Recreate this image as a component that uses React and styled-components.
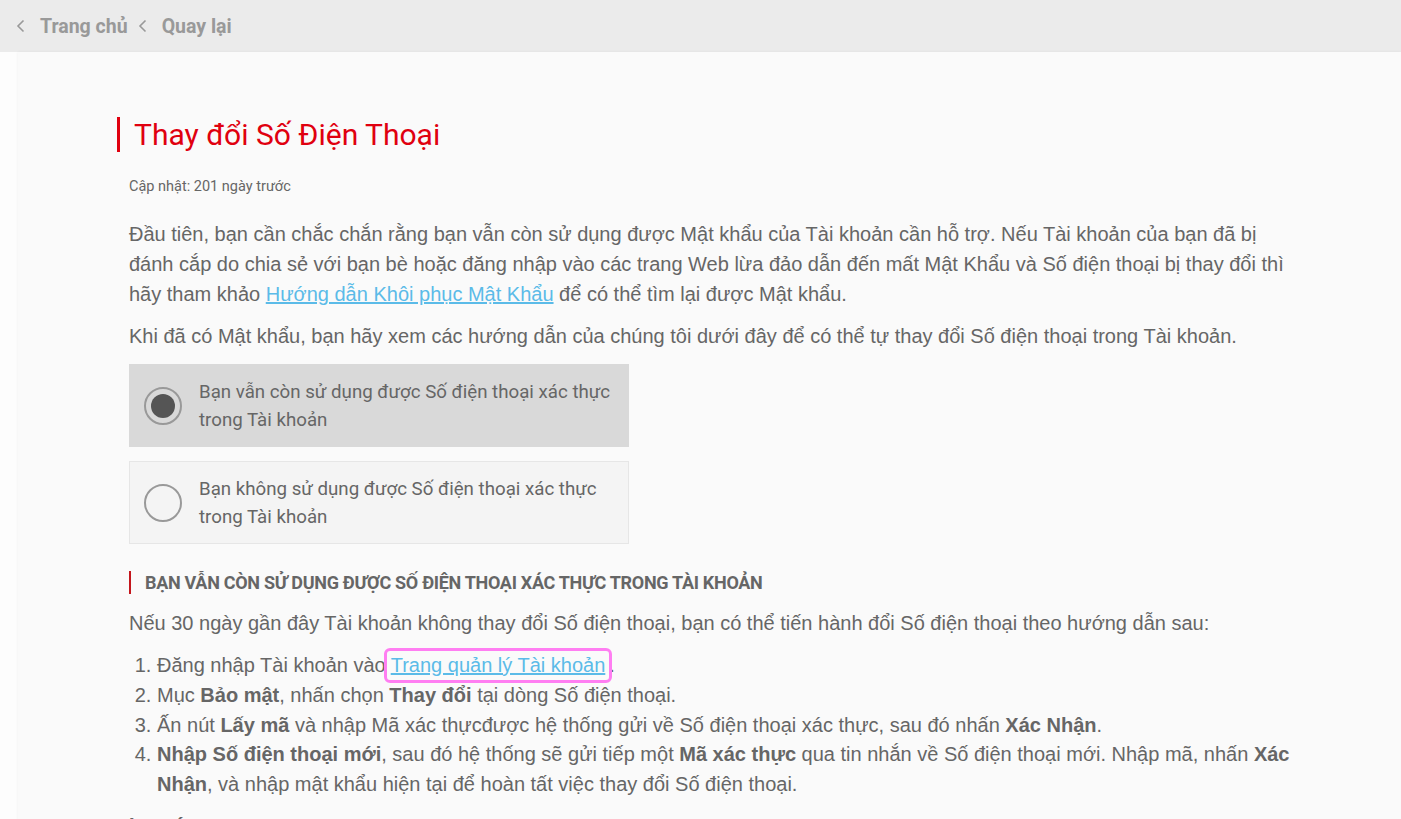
import React, { useState } from 'react'
import styled, { createGlobalStyle } from 'styled-components';

const Global = createGlobalStyle`
  body{
    margin:0;
    background:#fdfdfd;
    font-family:Roboto, "Liberation Sans", Arial, sans-serif;
    overflow:hidden;
  }
`

const TopBar = styled.nav`
  height:52px;
  background:#ebebeb;
  display:flex;
  align-items:center;
  padding-left:16px;
  a{
    display:flex;
    align-items:center;
    gap:14px;
    color:#999;
    font-weight:700;
    font-size:19.5px;
    text-decoration:none;
    margin-right:10px;
  }
`

const Panel = styled.main`
  margin-left:18px;
  background:#fafafa;
  box-shadow:0 0 3px rgba(0,0,0,0.06);
  min-height:767px;
`

const Article = styled.article`
  width:1185px;
  margin:0 auto;
  padding-top:65px;
`

const Title = styled.h1`
  margin:0;
  border-left:3px solid #e0000f;
  padding-left:14px;
  font-size:30px;
  font-weight:400;
  line-height:35px;
  color:#e0000f;
`

const Updated = styled.p`
  margin:26px 0 0 12px;
  font-size:14.5px;
  color:#666;
`

const Body = styled.div`
  padding-left:12px;
  font-family:"Liberation Sans", Arial, sans-serif;
  font-size:20px;
  color:#666;
  p{
    margin:0;
    line-height:30px;
  }
  a{
    color:#5bbbe8;
    text-decoration:underline;
  }
`

const Intro = styled.p`
  &&{ margin-top:24px; }
`

const Next = styled.p`
  &&{ margin-top:12px; }
`

const Choices = styled.div`
  margin-top:13px;
  width:500px;
  display:flex;
  flex-direction:column;
  gap:14px;
`

const Choice = styled.div`
  display:flex;
  align-items:center;
  height:83px;
  box-sizing:border-box;
  padding:0 6px 0 14px;
  gap:17px;
  background:${p => p.$active ? '#d9d9d9' : '#f4f4f4'};
  border:1px solid ${p => p.$active ? '#d9d9d9' : '#e6e6e6'};
  cursor:pointer;
  span{
    font-family:Roboto, sans-serif;
    font-size:18.7px;
    line-height:28px;
    color:#666;
  }
`

const Radio = styled.div`
  flex:none;
  width:34px;
  height:34px;
  border-radius:50%;
  border:2px solid #999;
  display:flex;
  align-items:center;
  justify-content:center;
  &::after{
    content:'';
    width:24px;
    height:24px;
    border-radius:50%;
    background:${p => p.$on ? '#555' : 'transparent'};
  }
`

const Heading = styled.h2`
  margin:27px 0 0;
  border-left:2px solid #c4161c;
  padding-left:14px;
  font-family:Roboto, sans-serif;
  font-size:18px;
  font-weight:700;
  line-height:23px;
  color:#666;
  letter-spacing:-0.3px;
`

const Lead = styled.p`
  &&{ margin-top:14px; }
`

const Steps = styled.ol`
  margin:13px 0 0;
  padding-left:28px;
  line-height:29.8px;
  li b{ color:#666; }
`

const Marked = styled.a`
  outline:3px solid #ff7ef2;
  border-radius:3px;
  padding:3px 4px 4px;
  margin-left:1px;
`

const Cut = styled.p`
  &&{ margin-top:10px; font-weight:700; }
`

const Chevron = () => (
  <svg width="10" height="14" viewBox="0 0 10 14" fill="none" stroke="#999" strokeWidth="1.6">
    <path d="M7.5 1.5 2 7l5.5 5.5" />
  </svg>
)

const choices = [
  'Bạn vẫn còn sử dụng được Số điện thoại xác thực trong Tài khoản',
  'Bạn không sử dụng được Số điện thoại xác thực trong Tài khoản',
]

export default function App() {
  const [picked, setPicked] = useState(0)
  return (
    <>
      <Global />
      <TopBar>
        <a href="#"><Chevron />Trang chủ</a>
        <a href="#"><Chevron />Quay lại</a>
      </TopBar>
      <Panel>
        <Article>
          <Title>Thay đổi Số Điện Thoại</Title>
          <Updated>Cập nhật: 201 ngày trước</Updated>
          <Body>
            <Intro>
              Đầu tiên, bạn cần chắc chắn rằng bạn vẫn còn sử dụng được Mật khẩu của Tài khoản cần hỗ trợ. Nếu Tài khoản của bạn đã bị đánh cắp do chia sẻ với bạn bè hoặc đăng nhập vào các trang Web lừa đảo dẫn đến mất Mật Khẩu và Số điện thoại bị thay đổi thì hãy tham khảo <a href="#">Hướng dẫn Khôi phục Mật Khẩu</a> để có thể tìm lại được Mật khẩu.
            </Intro>
            <Next>Khi đã có Mật khẩu, bạn hãy xem các hướng dẫn của chúng tôi dưới đây để có thể tự thay đổi Số điện thoại trong Tài khoản.</Next>
            <Choices>
              {choices.map((c, i) => (
                <Choice key={i} $active={picked === i} onClick={() => setPicked(i)}>
                  <Radio $on={picked === i} />
                  <span>{c}</span>
                </Choice>
              ))}
            </Choices>
            <Heading>BẠN VẪN CÒN SỬ DỤNG ĐƯỢC SỐ ĐIỆN THOẠI XÁC THỰC TRONG TÀI KHOẢN</Heading>
            <Lead>Nếu 30 ngày gần đây Tài khoản không thay đổi Số điện thoại, bạn có thể tiến hành đổi Số điện thoại theo hướng dẫn sau:</Lead>
            <Steps>
              <li>Đăng nhập Tài khoản vào<Marked href="#">Trang quản lý Tài khoản</Marked>.</li>
              <li>Mục <b>Bảo mật</b>, nhấn chọn <b>Thay đổi</b> tại dòng Số điện thoại.</li>
              <li>Ấn nút <b>Lấy mã</b> và nhập Mã xác thựcđược hệ thống gửi về Số điện thoại xác thực, sau đó nhấn <b>Xác Nhận</b>.</li>
              <li><b>Nhập Số điện thoại mới</b>, sau đó hệ thống sẽ gửi tiếp một <b>Mã xác thực</b> qua tin nhắn về Số điện thoại mới. Nhập mã, nhấn <b>Xác Nhận</b>, và nhập mật khẩu hiện tại để hoàn tất việc thay đổi Số điện thoại.</li>
            </Steps>
            <Cut>Lưu ý</Cut>
          </Body>
        </Article>
      </Panel>
    </>
  )
}
